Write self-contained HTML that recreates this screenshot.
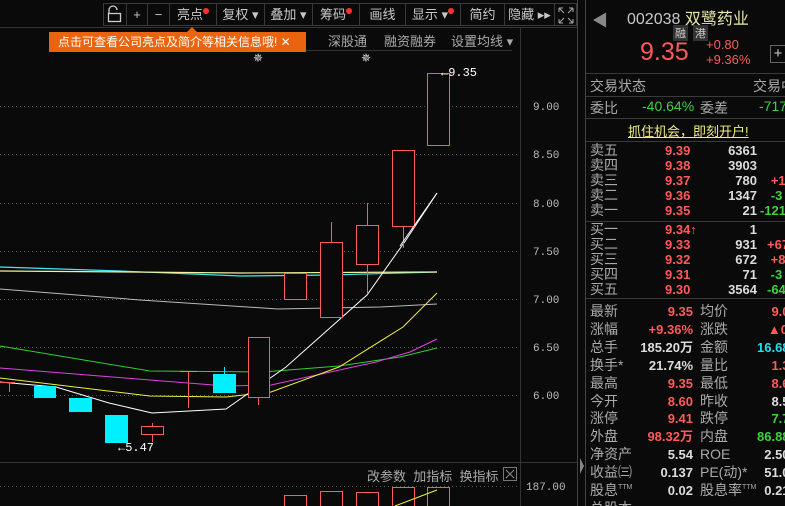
<!DOCTYPE html>
<html><head><meta charset="utf-8"><style>
*{margin:0;padding:0;box-sizing:border-box}
html,body{width:785px;height:506px;overflow:hidden}
body{background:#0a0a0a;position:relative;font-family:"Liberation Sans","Noto Sans CJK SC",sans-serif;color:#c8c8c8}
.a{position:absolute;white-space:nowrap}
.tb{position:absolute;top:3px;height:23px;border:1px solid #3a3a3a;font-size:13px;line-height:21px;text-align:center;color:#c8c8c8;background:#0a0a0a}
.dot{display:inline-block;width:6px;height:6px;border-radius:3px;background:#ff3030;vertical-align:top;margin-top:4px}
.r{color:#ff5a5a}.g{color:#3fd13f}.c{color:#1ee0f0}.w{color:#dcdcdc}
.rp{font-size:14px}
.hl{position:absolute;left:586px;width:199px;height:1px;background:#3a3a3a}
sup{font-size:7px;line-height:0;vertical-align:6px}
</style></head><body>
<svg class="a" style="left:0;top:0" width="785" height="506">
<g stroke="#555" stroke-dasharray="1 3" stroke-width="1">
<line x1="0" y1="106.5" x2="520" y2="106.5"/><line x1="0" y1="154.5" x2="520" y2="154.5"/><line x1="0" y1="203.5" x2="520" y2="203.5"/><line x1="0" y1="251.5" x2="520" y2="251.5"/><line x1="0" y1="299.5" x2="520" y2="299.5"/><line x1="0" y1="347.5" x2="520" y2="347.5"/><line x1="0" y1="395.5" x2="520" y2="395.5"/><line x1="0" y1="486.5" x2="520" y2="486.5"/>
</g>
<line x1="0" y1="462.5" x2="578" y2="462.5" stroke="#333"/>
<line x1="0" y1="27.5" x2="578" y2="27.5" stroke="#333"/>
<line x1="306" y1="50.5" x2="512" y2="50.5" stroke="#333"/>
<line x1="520.5" y1="27" x2="520.5" y2="506" stroke="#333"/>
<line x1="577.5" y1="0" x2="577.5" y2="506" stroke="#444"/>
<line x1="585.5" y1="0" x2="585.5" y2="506" stroke="#444"/>
<path d="M580,458 L584,466 L580,474 Z" fill="#888"/>
<polyline fill="none" stroke="#40e8f0" stroke-width="1.2" points="0,267 120,271 241,276 330,275 437,272"/>
<polyline fill="none" stroke="#f0f0a0" stroke-width="1.2" points="0,271 130,272 241,273 437,272"/>
<polyline fill="none" stroke="#bbb" points="0,289 140,300 278,309 380,307 437,304"/>
<polyline fill="none" stroke="#30d030" points="0,346 150,371 263,372 339,366 400,357 437,348"/>
<polyline fill="none" stroke="#e040e0" points="0,368 150,380 226,386 271,385 376,362 410,352 437,339"/>
<polyline fill="none" stroke="#f0f040" points="0,378 150,396 226,397 271,392 339,367 403,327 437,293"/>
<polyline fill="none" stroke="#fff" points="0,382 56,387 109,403 152,413 226,409 286,367 367,295 406,240 437,193"/>
<g fill="none" stroke="#ff5a5a">
<line x1="0" y1="382.5" x2="15" y2="382.5"/><line x1="9.5" y1="382" x2="9.5" y2="392"/>
<rect x="141.5" y="426.5" width="22" height="8"/><line x1="152.5" y1="423" x2="152.5" y2="426"/><line x1="152.5" y1="435" x2="152.5" y2="442"/>
<line x1="188.5" y1="371" x2="188.5" y2="408"/><line x1="180" y1="371.5" x2="197" y2="371.5" stroke="#c8a040"/>
<rect x="248.5" y="337.5" width="21" height="60" fill="#0a0a0a"/><line x1="258.5" y1="398" x2="258.5" y2="405"/>
<rect x="284.5" y="273.5" width="22" height="26" fill="#0a0a0a"/>
<rect x="320.5" y="242.5" width="22" height="75" fill="#0a0a0a"/><line x1="331.5" y1="222" x2="331.5" y2="242"/>
<rect x="356.5" y="225.5" width="22" height="39" fill="#0a0a0a"/><line x1="367.5" y1="203" x2="367.5" y2="225"/><line x1="367.5" y1="265" x2="367.5" y2="293"/>
<rect x="392.5" y="150.5" width="22" height="76" fill="#0a0a0a"/><line x1="403.5" y1="227" x2="403.5" y2="248"/>
<rect x="427.5" y="73.5" width="22" height="72" fill="#0a0a0a"/>
</g>
<polyline fill="none" stroke="#fff" points="400,246 437,193"/>
<g fill="#00f0ff">
<rect x="34" y="386" width="22" height="12"/><rect x="69" y="398" width="23" height="14"/><rect x="105" y="415" width="23" height="28"/><rect x="213" y="374" width="23" height="19"/>
</g>
<line x1="224.5" y1="367" x2="224.5" y2="374" stroke="#00f0ff"/>
<g fill="none" stroke="#ff5a5a">
<rect x="284.5" y="495.5" width="22" height="20"/><rect x="320.5" y="491.5" width="22" height="20"/><rect x="356.5" y="492.5" width="22" height="20"/><rect x="392.5" y="487.5" width="22" height="20"/><rect x="427.5" y="487.5" width="22" height="20"/>
</g>
<line x1="395" y1="506" x2="437" y2="490" stroke="#f0f040"/>
<text x="118" y="451" fill="#fff" font-size="12" font-family="Liberation Mono,monospace">←5.47</text>
<text x="441" y="76" fill="#fff" font-size="12" font-family="Liberation Mono,monospace">←9.35</text>
<g fill="#bbb" font-size="11" font-family="Liberation Mono,monospace">
<text x="533" y="110">9.00</text><text x="533" y="158">8.50</text><text x="533" y="207">8.00</text><text x="533" y="255">7.50</text><text x="533" y="303">7.00</text><text x="533" y="351">6.50</text><text x="533" y="399">6.00</text><text x="526" y="490">187.00</text>
</g>
<text x="253" y="62" fill="#ddd" font-size="12">✵</text><text x="361" y="62" fill="#ddd" font-size="12">✵</text>
<rect x="503.5" y="467.5" width="13" height="13" fill="none" stroke="#777"/>
<path d="M506,470 L514,478 M514,470 L506,478" stroke="#888"/>
<!-- lock icon -->
<path d="M109,13 L109,10 A4,4 0 0 1 117,10" fill="none" stroke="#ccc" stroke-width="1.3"/>
<rect x="108.5" y="13.5" width="12" height="8" fill="none" stroke="#ccc" stroke-width="1.3"/>
<!-- expand icon -->
<path d="M559,8 L563,8 M559,8 L559,12 M559,8 L564,13 M573,8 L569,8 M573,8 L573,12 M573,8 L568,13 M559,23 L563,23 M559,23 L559,19 M559,23 L564,18 M573,23 L569,23 M573,23 L573,19 M573,23 L568,18" stroke="#aaa" fill="none"/>
</svg>
<div class="tb" style="left:103px;width:24px;background:transparent"></div>
<div class="tb" style="left:126px;width:22px">+</div>
<div class="tb" style="left:147px;width:23px">−</div>
<div class="tb" style="left:169px;width:48px">亮点<span class="dot"></span></div>
<div class="tb" style="left:216px;width:49px">复权 ▾</div>
<div class="tb" style="left:264px;width:49px">叠加 ▾</div>
<div class="tb" style="left:312px;width:48px">筹码<span class="dot"></span></div>
<div class="tb" style="left:359px;width:47px">画线</div>
<div class="tb" style="left:405px;width:56px">显示 ▾<span class="dot"></span></div>
<div class="tb" style="left:460px;width:45px">简约</div>
<div class="tb" style="left:504px;width:51px">隐藏 ▸▸</div>
<div class="tb" style="left:554px;width:23px;background:transparent"></div>
<div class="a" style="left:49px;top:32px;width:257px;height:20px;background:#ea6410;color:#fff;font-size:12px;line-height:20px;padding-left:9px">点击可查看公司亮点及简介等相关信息哦! ✕</div>
<div class="a" style="left:186px;top:27px;width:0;height:0;border:6px solid transparent;border-bottom-color:#ea6410;border-top:0"></div>
<div class="a" style="left:328px;top:31px;font-size:13px;color:#aaa">深股通</div>
<div class="a" style="left:384px;top:31px;font-size:13px;color:#aaa">融资融券</div>
<div class="a" style="left:451px;top:31px;font-size:13px;color:#aaa">设置均线 ▾</div>
<div class="a" style="left:367px;top:466px;font-size:13px;color:#aaa">改参数&nbsp; 加指标&nbsp; 换指标</div>
<div class="a" style="left:592px;top:7px;font-size:16px;color:#888">◀</div>
<div class="a" style="left:627px;top:5px;font-size:16px;color:#c8c8c8">002038 <span style="color:#e8e8a8">双鹭药业</span></div>
<div class="a" style="left:673px;top:25px;font-size:11px;background:#333;color:#ccc;padding:0 2px">融</div>
<div class="a" style="left:693px;top:25px;font-size:11px;background:#333;color:#ccc;padding:0 2px">港</div>
<div class="a r" style="left:640px;top:38px;font-size:25px">9.35</div>
<div class="a r" style="left:706px;top:37px;font-size:13px;line-height:15px">+0.80<br>+9.36%</div>
<div class="a" style="left:770px;top:45px;width:16px;height:18px;border:1px solid #666;color:#ccc;font-size:15px;line-height:15px;text-align:center">+</div>
<div class="hl" style="top:73px"></div>
<div class="a rp" style="left:590px;top:76px;color:#aaa">交易状态</div>
<div class="a rp" style="left:753px;top:76px;color:#aaa">交易中</div>
<div class="hl" style="top:96px"></div>
<div class="a rp" style="left:590px;top:98px;color:#aaa">委比</div>
<div class="a rp g" style="left:642px;top:98px">-40.64%</div>
<div class="a rp" style="left:700px;top:98px;color:#aaa">委差</div>
<div class="a rp g" style="left:759px;top:98px">-717</div>
<div class="hl" style="top:118px"></div>
<div class="a" style="left:628px;top:121px;font-size:13px;color:#f0f080;text-decoration:underline">抓住机会，即刻开户!</div>
<div class="hl" style="top:141px"></div>
<div class="a" style="left:590px;top:143px;font-size:14px;line-height:15px;color:#aaa">卖五<br>卖四<br>卖三<br>卖二<br>卖一</div>
<div class="a r" style="left:665px;top:143px;font-size:13px;line-height:15px;font-weight:bold">9.39<br>9.38<br>9.37<br>9.36<br>9.35</div>
<div class="a w" style="left:712px;width:45px;text-align:right;top:143px;font-size:13px;line-height:15px;font-weight:bold">6361<br>3903<br>780<br>1347<br>21</div>
<div class="a" style="left:760px;top:143px;font-size:13px;line-height:15px;font-weight:bold"><br><br><span class="r">&nbsp;&nbsp;&nbsp;+1</span><br><span class="g">&nbsp;&nbsp;&nbsp;-3</span><br><span class="g">-121</span></div>
<div class="hl" style="top:221px"></div>
<div class="a" style="left:590px;top:222px;font-size:14px;line-height:15px;color:#aaa">买一<br>买二<br>买三<br>买四<br>买五</div>
<div class="a r" style="left:665px;top:222px;font-size:13px;line-height:15px;font-weight:bold">9.34↑<br>9.33<br>9.32<br>9.31<br>9.30</div>
<div class="a w" style="left:712px;width:45px;text-align:right;top:222px;font-size:13px;line-height:15px;font-weight:bold">1<br>931<br>672<br>71<br>3564</div>
<div class="a" style="left:767px;top:222px;font-size:13px;line-height:15px;font-weight:bold"><br><span class="r">+67</span><br><span class="r">&nbsp;+8</span><br><span class="g">&nbsp;-3</span><br><span class="g">-64</span></div>
<div class="hl" style="top:298px"></div>
<div class="a" style="left:590px;top:303px;font-size:14px;line-height:17.9px;color:#aaa">最新<br>涨幅<br>总手<br>换手*<br>最高<br>今开<br>涨停<br>外盘<br>净资产<br>收益㈢<br>股息<sup>TTM</sup><br>总股本</div>
<div class="a" style="left:600px;width:93px;text-align:right;top:303px;font-size:13px;line-height:17.9px;font-weight:bold"><span class="r">9.35</span><br><span class="r">+9.36%</span><br><span class="w">185.20万</span><br><span class="w">21.74%</span><br><span class="r">9.35</span><br><span class="r">8.60</span><br><span class="r">9.41</span><br><span class="r">98.32万</span><br><span class="w">5.54</span><br><span class="w">0.137</span><br><span class="w">0.02</span></div>
<div class="a" style="left:700px;top:303px;font-size:14px;line-height:17.9px;color:#aaa">均价<br>涨跌<br>金额<br>量比<br>最低<br>昨收<br>跌停<br>内盘<br>ROE<br>PE(动)*<br>股息率<sup>TTM</sup></div>
<div class="a" style="left:757px;top:303px;font-size:13px;line-height:17.9px;font-weight:bold"><span class="r">&nbsp;&nbsp;&nbsp;&nbsp;9.0</span><br><span class="r">&nbsp;&nbsp;&nbsp;▲0.8</span><br><span class="c">16.68</span><br><span class="r">&nbsp;&nbsp;&nbsp;&nbsp;1.3</span><br><span class="r">&nbsp;&nbsp;&nbsp;&nbsp;8.6</span><br><span class="w">&nbsp;&nbsp;&nbsp;&nbsp;8.5</span><br><span class="g">&nbsp;&nbsp;&nbsp;&nbsp;7.7</span><br><span class="g">86.88</span><br><span class="w">&nbsp;&nbsp;2.50</span><br><span class="w">&nbsp;&nbsp;51.0</span><br><span class="w">&nbsp;&nbsp;0.21</span></div>
</body></html>
